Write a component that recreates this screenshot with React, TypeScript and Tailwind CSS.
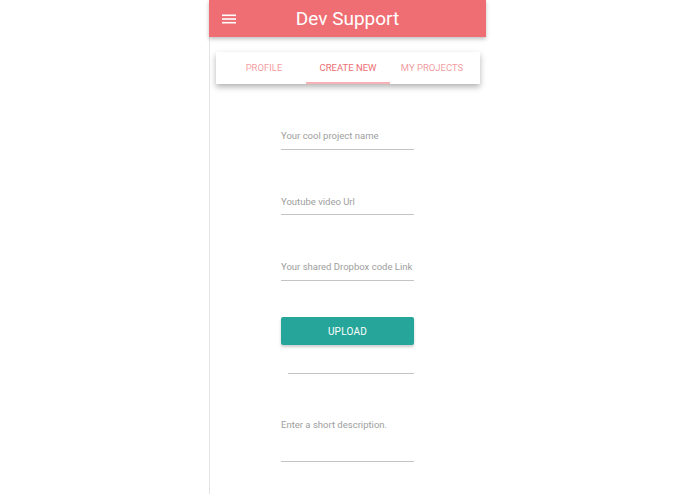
export default function App() {
  const tabs = ["Profile", "Create New", "My Projects"];

  return (
    <div className="h-screen overflow-hidden bg-white" style={{ fontFamily: "Roboto, 'Liberation Sans', sans-serif" }}>
      <div className="mx-auto flex h-full w-[277px] flex-col">
        {/* Nav bar */}
        <header className="relative z-10 flex h-[37px] shrink-0 items-center bg-[#ee6e73] px-[13px] shadow-[0_2px_4px_rgba(0,0,0,0.25)]">
          <svg width="14" height="12" viewBox="0 0 14 12" className="shrink-0">
            <rect x="0" y="1.5" width="14" height="1.6" fill="#fff" />
            <rect x="0" y="5.2" width="14" height="1.6" fill="#fff" />
            <rect x="0" y="8.9" width="14" height="1.6" fill="#fff" />
          </svg>
          <h1 className="flex-1 pr-[14px] text-center text-[19px] leading-none font-normal text-white">Dev Support</h1>
        </header>

        <main className="flex flex-1 flex-col border-l border-[#e4e4e4]">
          {/* Tabs */}
          <nav className="mr-[6px] ml-[6px] mt-[15px] flex h-[32px] bg-white px-[6px] shadow-[0_3px_6px_rgba(0,0,0,0.3)]">
            {tabs.map((t, i) => (
              <div
                key={t}
                className={
                  i === 1
                    ? "relative flex flex-1 items-center justify-center text-[9.5px] uppercase text-[#ee6e73] whitespace-nowrap"
                    : "relative flex flex-1 items-center justify-center text-[9.5px] uppercase text-[#ee6e73]/70 whitespace-nowrap"
                }
              >
                {t}
                {i === 1 && <span className="absolute bottom-0 left-0 right-0 h-[2px] bg-[#f6b2b5]" />}
              </div>
            ))}
          </nav>

          {/* Form */}
          <form className="ml-[71px] mt-[45px] flex w-[133px] flex-col text-[9.5px] text-[#9e9e9e]">
            <div className="border-b border-[#c4c4c4] pt-[1px] pb-[7px] leading-[12px]">Your cool project name</div>
            <div className="mt-[45px] border-b border-[#c4c4c4] pt-[1px] pb-[6px] leading-[12px]">Youtube video Url</div>
            <div className="mt-[45px] border-b border-[#c4c4c4] pt-[1px] pb-[7px] leading-[12px] whitespace-nowrap">Your shared Dropbox code Link</div>

            <button
              type="button"
              className="mt-[36px] flex h-[28px] items-center justify-center rounded-[2px] bg-[#26a69a] text-[10px] tracking-wide text-white uppercase shadow-[0_2px_3px_rgba(0,0,0,0.2)]"
            >
              Upload
            </button>
            <div className="mt-[28px] ml-[7px] border-b border-[#c4c4c4]" />

            <div className="mt-[44px] border-b border-[#c4c4c4] pt-[1px] pb-[30px] leading-[12px]">Enter a short description.</div>
          </form>
        </main>
      </div>
    </div>
  );
}
